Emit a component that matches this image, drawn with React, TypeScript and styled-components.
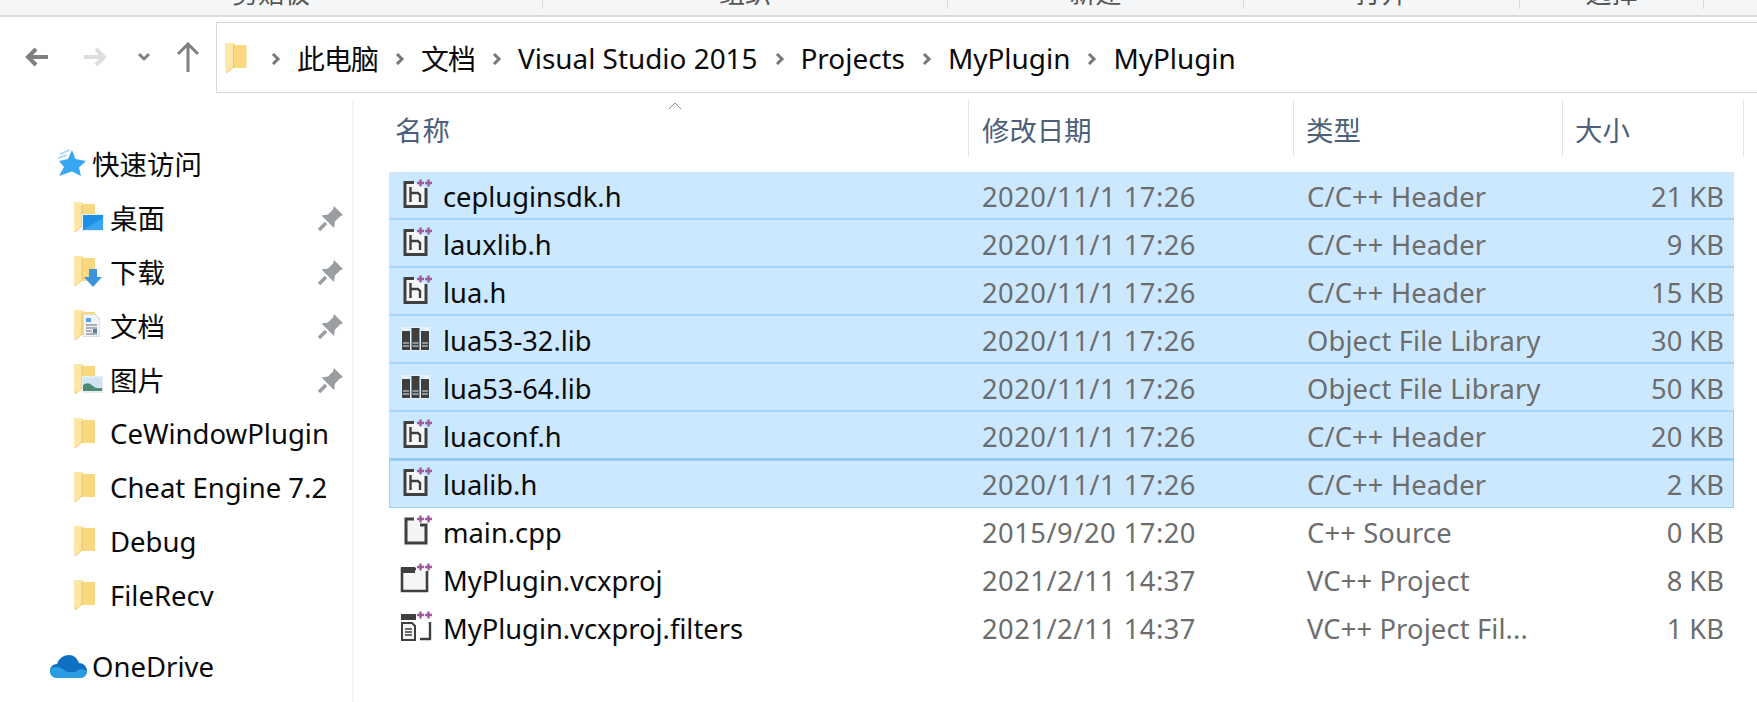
import React from 'react';
import styled, { createGlobalStyle, css } from 'styled-components';

const GlobalStyle = createGlobalStyle`
  html, body {
    margin: 0;
    padding: 0;
    height: 702px;
    overflow: hidden;
    background: #fff;
    font-family: "Noto Sans", "Noto Sans CJK SC", sans-serif;
  }
  * {
    box-sizing: border-box;
  }
`;

const Window = styled.div`
  width: 1757px;
  height: 702px;
  overflow: hidden;
  display: flex;
  flex-direction: column;
`;

const Ribbon = styled.div`
  display: flex;
  height: 17px;
  flex-shrink: 0;
  background: #f5f6f7;
  border-bottom: 2px solid #dcdcdc;
  overflow: hidden;
`;

const RibbonGroup = styled.div<{ $width: number }>`
  width: ${(p) => p.$width}px;
  height: 9px;
  border-right: 1px solid #dadbdc;
  display: flex;
  justify-content: center;
  font-size: 26px;
  line-height: 30px;
  color: #555;
  overflow: hidden;

  span {
    margin-top: -22px;
  }
`;

const NavBar = styled.div`
  display: flex;
  height: 83px;
  flex-shrink: 0;
  padding-top: 5px;
`;

const NavButtons = styled.div`
  width: 216px;
  height: 70px;
  flex-shrink: 0;
  display: flex;
  align-items: center;
  padding-left: 8px;
`;

const NavButton = styled.div<{ $width: number }>`
  width: ${(p) => p.$width}px;
  display: flex;
  justify-content: center;
  flex-shrink: 0;
`;

const AddressBar = styled.div`
  flex: 1;
  height: 71px;
  display: flex;
  align-items: center;
  padding-left: 8px;
  border: 1px solid #d9d9d9;
  border-right: none;
  font-size: 27.9px;
  color: #0a0a0a;
`;

const Crumb = styled.span<{ $cjk: boolean }>`
  letter-spacing: ${(p) => (p.$cjk ? -0.9 : 0)}px;
`;

const CrumbArrow = styled.svg<{ $first?: boolean }>`
  width: 11px;
  height: 14px;
  margin: 2px 16px 0 ${(p) => (p.$first ? 23 : 16)}px;
  flex-shrink: 0;
`;

const Main = styled.div`
  flex: 1;
  display: flex;
  min-height: 0;
`;

const NavPane = styled.div`
  width: 354px;
  flex-shrink: 0;
  padding-top: 36px;
  border-right: 2px solid #f5f5f5;
`;

const NavRow = styled.div<{ $top?: boolean; $gap?: number }>`
  height: 54px;
  display: flex;
  align-items: center;
  position: relative;
  font-size: 27.5px;
  color: #0a0a0a;
  margin-top: ${(p) => p.$gap || 0}px;
  padding-left: ${(p) => (p.$top ? 50 : 74)}px;
`;

const NavIcon = styled.div<{ $top?: boolean; $inset?: number }>`
  width: ${(p) => (p.$top ? 42 : 36)}px;
  height: 36px;
  flex-shrink: 0;
  display: flex;
  align-items: center;
  padding-left: ${(p) => p.$inset || 0}px;
`;

const PinBox = styled.div`
  position: absolute;
  left: 317px;
  top: 13px;
  width: 26px;
  height: 26px;
`;

const Content = styled.div`
  flex: 1;
  min-width: 0;
  padding-left: 35px;
  position: relative;
`;

const SortCaret = styled.svg`
  position: absolute;
  left: 314px;
  top: 2px;
  width: 14px;
  height: 8px;
`;

const HeaderRow = styled.div`
  display: grid;
  grid-template-columns: 580px 325px 269px 181px;
  height: 57px;
  margin-bottom: 15px;
`;

const HeaderCell = styled.div<{ $pad: number }>`
  display: flex;
  align-items: center;
  padding-left: ${(p) => p.$pad}px;
  border-right: 1px solid #e5e5e5;
  font-size: 27.4px;
  color: #4c607a;
`;

const rowTones = {
  plain: css``,
  selected: css`
    background: #cce8ff;
    box-shadow: inset 0 -2px 0 #a5d5fb;
  `,
  framed: css`
    background: #cce8ff;
    box-shadow: inset 0 -2px 0 #8fc9f6, inset -1px 0 0 #99d1ff;
  `,
  focused: css`
    background: #cce8ff;
    box-shadow: inset 0 0 0 1px #99d1ff;
  `,
};

type Tone = keyof typeof rowTones;

const FileRow = styled.div<{ $tone: Tone }>`
  display: grid;
  grid-template-columns: 580px 325px 269px 171px;
  width: 1345px;
  height: 48px;
  align-items: center;
  font-size: 27.3px;
  ${(p) => rowTones[p.$tone]}
`;

const NameCell = styled.div`
  display: flex;
  align-items: center;
  padding-left: 11px;
  color: #0a0a0a;
`;

const FileIconBox = styled.svg`
  width: 34px;
  height: 34px;
  flex-shrink: 0;
  margin-right: 9px;
`;

const MetaCell = styled.div<{ $right?: boolean; $spacing?: number }>`
  color: #6d6d6d;
  white-space: nowrap;
  letter-spacing: ${(p) => p.$spacing || 0}px;
  padding-left: ${(p) => (p.$right ? 0 : 13)}px;
  padding-right: ${(p) => (p.$right ? 10 : 0)}px;
  text-align: ${(p) => (p.$right ? 'right' : 'left')};
`;

function ArrowIcon({ color }: { color: string }): JSX.Element {
  return (
    <svg width="24" height="22" viewBox="0 0 24 22">
      <path d="M11 3 3 11l8 8M3 11h20" fill="none" stroke={color} strokeWidth="4" />
    </svg>
  );
}

function FolderIcon({ large }: { large?: boolean }): JSX.Element {
  return (
    <svg width={large ? 22 : 21} height="30" viewBox="0 0 21 30">
      <path d="M0 0h8l2 2h11v23H0z" fill="#f9d87f" />
      <path d="M0 0h8v24l-7 6-1-1z" fill="#fde7a8" />
      <path d="M8 3v21L1 30" fill="none" stroke="#e9c264" strokeWidth="1" />
    </svg>
  );
}

function StarIcon(): JSX.Element {
  return (
    <svg width="30" height="28" viewBox="0 0 30 28">
      <path d="M15 1l3.500 9L29 12l-7 6.500L24 27l-9-4.500L2 27l5-9-5-6 9-2z" fill="#39a6f4" />
      <path d="M3 5l10-4M1 9l9-3" stroke="#a3d6f9" strokeWidth="1.500" />
    </svg>
  );
}

function CloudIcon(): JSX.Element {
  return (
    <svg width="37" height="25" viewBox="0 0 37 25">
      <path d="M8 24C2 24 0 20 0 17c0-4 3-7 7-7 2-6 7-9 12-9 5 0 8 3 10 8 4 0 8 3 8 8 0 4-3 7-7 7z" fill="#0f6fc0" />
      <path d="M6 13c4 0 8 2 11 5h8c3-3 7-4 12-1 0 4-3 7-7 7H8c-6 0-8-4-8-7 0-2 2-4 6-4z" fill="#2a9ce3" />
    </svg>
  );
}

function PinIcon(): JSX.Element {
  return (
    <svg width="26" height="26" viewBox="0 0 26 26">
      <path d="M17 0l9 9-3 1.500-5 5-1 6.500L4.500 9.500l6.500-1 5-5z" fill="#9a9ea3" />
      <path d="M9 17 2 24" stroke="#9a9ea3" strokeWidth="3.500" />
    </svg>
  );
}

function DesktopBadge(): JSX.Element {
  return (
    <svg width="22" height="17" viewBox="0 0 22 17">
      <rect width="22" height="17" fill="#eaf4fc" />
      <rect x="1" y="1" width="20" height="15" fill="#1f8fe8" />
      <path d="M1 16 21 4v12z" fill="#38a5f3" />
    </svg>
  );
}

function DownloadBadge(): JSX.Element {
  return (
    <svg width="18" height="18" viewBox="0 0 18 18">
      <path d="M5 0h8v8h5l-9 10L0 8h5z" fill="#3d94de" />
    </svg>
  );
}

function DocsBadge(): JSX.Element {
  return (
    <svg width="17" height="23" viewBox="0 0 17 23">
      <path d="M0 0h12l5 5v18H0z" fill="#f1f3f6" stroke="#c9ced4" />
      <path d="M3 4h5v4H3z" fill="#5aa3e0" />
      <path d="M3 11h11M3 14h11M3 17h6M3 20h11" stroke="#8d99a6" strokeWidth="1.300" />
      <path d="M10 15h4v4h-4z" fill="#5d7f94" />
    </svg>
  );
}

function PictureBadge(): JSX.Element {
  return (
    <svg width="21" height="17" viewBox="0 0 21 17">
      <rect width="21" height="17" fill="#e6ecf1" />
      <rect x="1" y="2" width="19" height="13" fill="#cfe3f2" />
      <path d="M1 9c4-3 7-2 10 1s6 2 9 2v3H1z" fill="#4f8a78" />
    </svg>
  );
}

const Badge = styled.div<{ $left: number; $top: number }>`
  position: absolute;
  left: ${(p) => p.$left}px;
  top: ${(p) => p.$top}px;
  line-height: 0;
`;

const FolderStack = styled.div`
  position: relative;
  width: 36px;
  height: 30px;
  line-height: 0;
`;

function Plus({ x, y }: { x: number; y: number }): JSX.Element {
  return <path d={`M${x} ${y}h7M${x + 3.5} ${y - 3.5}v7`} stroke="#a05aa0" strokeWidth="2.400" />;
}

function Pluses({ y }: { y: number }): JSX.Element {
  return (
    <>
      <Plus x={17} y={y} />
      <Plus x={25} y={y} />
    </>
  );
}

type FileKind = 'header' | 'lib' | 'source' | 'project' | 'filters';

function FileIcon({ kind }: { kind: FileKind }): JSX.Element {
  const dark = '#3f3f3f';
  if (kind === 'header') {
    return (
      <FileIconBox viewBox="0 0 34 34">
        <path d="M14 3.500H5v24h21V9" fill="#f4f6f8" stroke={dark} strokeWidth="3" />
        <path d="M10.500 8v15M10.500 14h7.500l2 2v7" fill="none" stroke={dark} strokeWidth="2.400" />
        <Pluses y={4} />
      </FileIconBox>
    );
  }
  if (kind === 'lib') {
    return (
      <FileIconBox viewBox="0 0 34 34">
        <rect x="1" y="4" width="29" height="24" fill="#eef6fc" opacity="0.7" />
        <rect x="2" y="8" width="8" height="19" fill={dark} />
        <rect x="11.500" y="5" width="8" height="22" fill={dark} />
        <rect x="21" y="8" width="8" height="19" fill={dark} />
        <path d="M3 20h6M3 23h6M12.500 20h6M12.500 23h6M22 20h6M22 23h6" stroke="#e3eef7" strokeWidth="1.200" />
      </FileIconBox>
    );
  }
  if (kind === 'source') {
    return (
      <FileIconBox viewBox="0 0 34 34">
        <path d="M14 4H6v24h20V10h-6" fill="#f4f4f4" stroke={dark} strokeWidth="3" />
        <Pluses y={4} />
      </FileIconBox>
    );
  }
  if (kind === 'project') {
    return (
      <FileIconBox viewBox="0 0 34 34">
        <path d="M2 6h25v22H2z" fill="#f6f6f6" stroke={dark} strokeWidth="2.600" />
        <path d="M1 4h14v6H1z" fill={dark} />
        <rect x="16" y="0" width="15" height="8" fill="#fff" />
        <Pluses y={4} />
      </FileIconBox>
    );
  }
  return (
    <FileIconBox viewBox="0 0 34 34">
      <path d="M1 3h15v6H1z" fill={dark} />
      <path d="M2 12h10l3 3v14H2z" fill="#f4f4f4" stroke={dark} strokeWidth="2" />
      <path d="M5 18h7M5 21h7M5 24h7" stroke={dark} strokeWidth="1.500" />
      <path d="M30 11v17H20" fill="none" stroke={dark} strokeWidth="2.400" />
      <Pluses y={4} />
    </FileIconBox>
  );
}

function Chevron({ first }: { first?: boolean }): JSX.Element {
  return (
    <CrumbArrow viewBox="0 0 11 14" $first={first}>
      <path d="M3 2l5 5-5 5" fill="none" stroke="#777" strokeWidth="3" />
    </CrumbArrow>
  );
}

const ribbonGroups = [
  { width: 543, label: '剪贴板' },
  { width: 405, label: '组织' },
  { width: 296, label: '新建' },
  { width: 276, label: '打开' },
  { width: 184, label: '选择' },
];

const crumbs = [
  { label: '此电脑', cjk: true },
  { label: '文档', cjk: true },
  { label: 'Visual Studio 2015', cjk: false },
  { label: 'Projects', cjk: false },
  { label: 'MyPlugin', cjk: false },
  { label: 'MyPlugin', cjk: false },
];

const pinned = [
  { label: '桌面', badge: <Badge $left={8} $top={12}><DesktopBadge /></Badge> },
  { label: '下载', badge: <Badge $left={10} $top={13}><DownloadBadge /></Badge> },
  { label: '文档', badge: <Badge $left={9} $top={4}><DocsBadge /></Badge> },
  { label: '图片', badge: <Badge $left={8} $top={12}><PictureBadge /></Badge> },
];

const folders = ['CeWindowPlugin', 'Cheat Engine 7.2', 'Debug', 'FileRecv'];

const files: { name: string; date: string; type: string; size: string; kind: FileKind; tone: Tone }[] = [
  { name: 'cepluginsdk.h', date: '2020/11/1 17:26', type: 'C/C++ Header', size: '21 KB', kind: 'header', tone: 'selected' },
  { name: 'lauxlib.h', date: '2020/11/1 17:26', type: 'C/C++ Header', size: '9 KB', kind: 'header', tone: 'selected' },
  { name: 'lua.h', date: '2020/11/1 17:26', type: 'C/C++ Header', size: '15 KB', kind: 'header', tone: 'selected' },
  { name: 'lua53-32.lib', date: '2020/11/1 17:26', type: 'Object File Library', size: '30 KB', kind: 'lib', tone: 'selected' },
  { name: 'lua53-64.lib', date: '2020/11/1 17:26', type: 'Object File Library', size: '50 KB', kind: 'lib', tone: 'selected' },
  { name: 'luaconf.h', date: '2020/11/1 17:26', type: 'C/C++ Header', size: '20 KB', kind: 'header', tone: 'framed' },
  { name: 'lualib.h', date: '2020/11/1 17:26', type: 'C/C++ Header', size: '2 KB', kind: 'header', tone: 'focused' },
  { name: 'main.cpp', date: '2015/9/20 17:20', type: 'C++ Source', size: '0 KB', kind: 'source', tone: 'plain' },
  { name: 'MyPlugin.vcxproj', date: '2021/2/11 14:37', type: 'VC++ Project', size: '8 KB', kind: 'project', tone: 'plain' },
  { name: 'MyPlugin.vcxproj.filters', date: '2021/2/11 14:37', type: 'VC++ Project Fil...', size: '1 KB', kind: 'filters', tone: 'plain' },
];

export default function App(): JSX.Element {
  return (
    <Window>
      <GlobalStyle />
      <Ribbon>
        {ribbonGroups.map((group) => (
          <RibbonGroup key={group.label} $width={group.width}>
            <span>{group.label}</span>
          </RibbonGroup>
        ))}
      </Ribbon>
      <NavBar>
        <NavButtons>
          <NavButton $width={58}><ArrowIcon color="#7f7f7f" /></NavButton>
          <NavButton $width={58}>
            <svg width="24" height="22" viewBox="0 0 24 22">
              <path d="M13 3l8 8-8 8M21 11H1" fill="none" stroke="#dedede" strokeWidth="4" />
            </svg>
          </NavButton>
          <NavButton $width={40}>
            <svg width="14" height="10" viewBox="0 0 14 10">
              <path d="M2 2l5 5 5-5" fill="none" stroke="#808080" strokeWidth="3" />
            </svg>
          </NavButton>
          <NavButton $width={48}>
            <svg width="24" height="30" viewBox="0 0 24 30">
              <path d="M2 12 12 2l10 10M12 2v28" fill="none" stroke="#808080" strokeWidth="3" />
            </svg>
          </NavButton>
        </NavButtons>
        <AddressBar>
          <FolderIcon large />
          <Chevron first />
          {crumbs.map((crumb, index) => (
            <React.Fragment key={`${crumb.label}-${index}`}>
              {index > 0 && <Chevron />}
              <Crumb $cjk={crumb.cjk}>{crumb.label}</Crumb>
            </React.Fragment>
          ))}
        </AddressBar>
      </NavBar>
      <Main>
        <NavPane>
          <NavRow $top>
            <NavIcon $top $inset={7}><StarIcon /></NavIcon>
            快速访问
          </NavRow>
          {pinned.map((item) => (
            <NavRow key={item.label}>
              <NavIcon>
                <FolderStack>
                  <FolderIcon />
                  {item.badge}
                </FolderStack>
              </NavIcon>
              {item.label}
              <PinBox><PinIcon /></PinBox>
            </NavRow>
          ))}
          {folders.map((folder) => (
            <NavRow key={folder}>
              <NavIcon><FolderIcon /></NavIcon>
              {folder}
            </NavRow>
          ))}
          <NavRow $top $gap={17}>
            <NavIcon $top><CloudIcon /></NavIcon>
            OneDrive
          </NavRow>
        </NavPane>
        <Content>
          <SortCaret viewBox="0 0 14 8">
            <path d="M1 7l6-6 6 6" fill="none" stroke="#8a8a8a" strokeWidth="1" />
          </SortCaret>
          <HeaderRow>
            <HeaderCell $pad={6}>名称</HeaderCell>
            <HeaderCell $pad={13}>修改日期</HeaderCell>
            <HeaderCell $pad={12}>类型</HeaderCell>
            <HeaderCell $pad={12}>大小</HeaderCell>
          </HeaderRow>
          {files.map((file) => (
            <FileRow key={file.name} $tone={file.tone}>
              <NameCell>
                <FileIcon kind={file.kind} />
                {file.name}
              </NameCell>
              <MetaCell $spacing={0.5}>{file.date}</MetaCell>
              <MetaCell $spacing={0.15}>{file.type}</MetaCell>
              <MetaCell $right>{file.size}</MetaCell>
            </FileRow>
          ))}
        </Content>
      </Main>
    </Window>
  );
}
